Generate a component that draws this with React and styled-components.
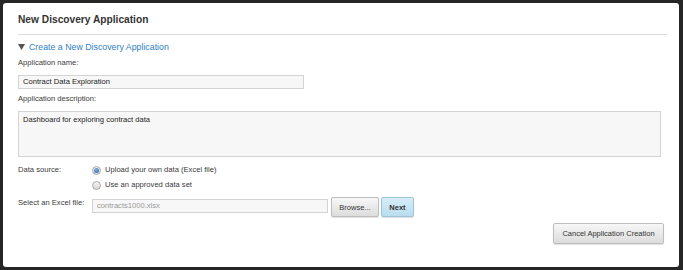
import React from 'react';
import styled, { createGlobalStyle } from 'styled-components';

const Global = createGlobalStyle`
  html, body {
    margin: 0;
    background: #262626;
  }
  #root {
    padding: 3px 0 0 3px;
  }
`;

const Dialog = styled.div`
  box-sizing: border-box;
  width: 676px;
  height: 264px;
  background: #fff;
  border-radius: 3px;
  padding: 0 15px;
  font-family: "Liberation Sans", Arial, sans-serif;
  font-size: 7.6px;
  color: #3a3a3a;
  display: flex;
  flex-direction: column;
`;

const Header = styled.div`
  padding: 10px 0 8px;
  margin-right: -3px;
  border-bottom: 1px solid #dcdcdc;
`;

const Title = styled.h1`
  margin: 0;
  font-size: 10.2px;
  line-height: 13px;
  font-weight: bold;
  color: #333;
`;

const Section = styled.div`
  margin-top: 6px;
  display: flex;
  align-items: center;
  gap: 4px;
  line-height: 12px;
  font-size: 8.8px;
  color: #2f80c6;
`;

const Arrow = styled.svg`
  width: 7px;
  height: 6px;
  fill: #555;
`;

const Label = styled.div`
  margin-top: 5px;
  line-height: 10px;
`;

const TextInput = styled.div`
  box-sizing: border-box;
  margin-top: 7px;
  width: ${({ $w }) => $w}px;
  height: ${({ $h }) => $h || 14}px;
  background: #f7f7f7;
  border: 1px solid #d4d4d4;
  padding: ${({ $h }) => ($h ? '3px 4px' : '0 4px')};
  line-height: ${({ $h }) => ($h ? '10px' : '12px')};
  color: ${({ $muted }) => ($muted ? '#999' : '#222')};
`;

const RadioRow = styled.div`
  display: flex;
  align-items: center;
  line-height: 12px;
  margin-top: ${({ $first }) => ($first ? 7 : 3)}px;
`;

const RowLabel = styled.div`
  width: 74px;
  flex-shrink: 0;
  margin-top: ${({ $top }) => $top || 0}px;
  align-self: ${({ $top }) => ($top !== undefined ? 'flex-start' : 'auto')};
`;

const Radio = styled.span`
  box-sizing: border-box;
  width: 9px;
  height: 9px;
  border-radius: 50%;
  border: 1px solid #a9a9a9;
  background: linear-gradient(#f4f4f4, #d6d6d6);
  margin-right: 4px;
  display: flex;
  align-items: center;
  justify-content: center;
  &::after {
    content: '';
    display: ${({ $checked }) => ($checked ? 'block' : 'none')};
    width: 5px;
    height: 5px;
    border-radius: 50%;
    background: radial-gradient(circle at 40% 35%, #7fb0e0, #2a66b0);
  }
`;

const FileRow = styled.div`
  display: flex;
  align-items: flex-start;
  margin-top: 6px;
  line-height: 10px;
`;

const FileInput = styled(TextInput)`
  margin-top: 2px;
  margin-right: 3px;
`;

const Button = styled.button`
  box-sizing: border-box;
  height: ${({ $h }) => $h || 20}px;
  width: ${({ $w }) => $w}px;
  margin-left: ${({ $ml }) => $ml || 0}px;
  padding: 0;
  font-family: "Liberation Sans", Arial, sans-serif;
  font-size: 7.5px;
  font-weight: ${({ $primary }) => ($primary ? 'bold' : 'normal')};
  color: #333;
  border: 1px solid ${({ $primary }) => ($primary ? '#9fc3d6' : '#bdbdbd')};
  border-radius: 2px;
  background: ${({ $primary }) =>
    $primary ? 'linear-gradient(#d7edf8, #b9dcee)' : 'linear-gradient(#f7f7f7, #dcdcdc)'};
  box-shadow: 0 1px 1px rgba(0, 0, 0, 0.12);
`;

const Footer = styled.div`
  display: flex;
  justify-content: flex-end;
  margin-top: 6px;
`;

export default function App() {
  return (
    <>
      <Global />
      <Dialog>
        <Header>
          <Title>New Discovery Application</Title>
        </Header>
        <Section>
          <Arrow viewBox="0 0 7 6">
            <path d="M0 0 H7 L3.5 6 Z" />
          </Arrow>
          <span>Create a New Discovery Application</span>
        </Section>
        <Label>Application name:</Label>
        <TextInput $w={286}>Contract Data Exploration</TextInput>
        <Label>Application description:</Label>
        <TextInput $w={643} $h={46}>Dashboard for exploring contract data</TextInput>
        <RadioRow $first>
          <RowLabel>Data source:</RowLabel>
          <Radio $checked />
          <span>Upload your own data (Excel file)</span>
        </RadioRow>
        <RadioRow>
          <RowLabel />
          <Radio />
          <span>Use an approved data set</span>
        </RadioRow>
        <FileRow>
          <RowLabel $top={1}>Select an Excel file:</RowLabel>
          <FileInput $w={236} $muted>contracts1000.xlsx</FileInput>
          <Button $w={48}>Browse...</Button>
          <Button $w={33} $ml={2} $primary>Next</Button>
        </FileRow>
        <Footer>
          <Button $w={111} $h={21}>Cancel Application Creation</Button>
        </Footer>
      </Dialog>
    </>
  );
}
